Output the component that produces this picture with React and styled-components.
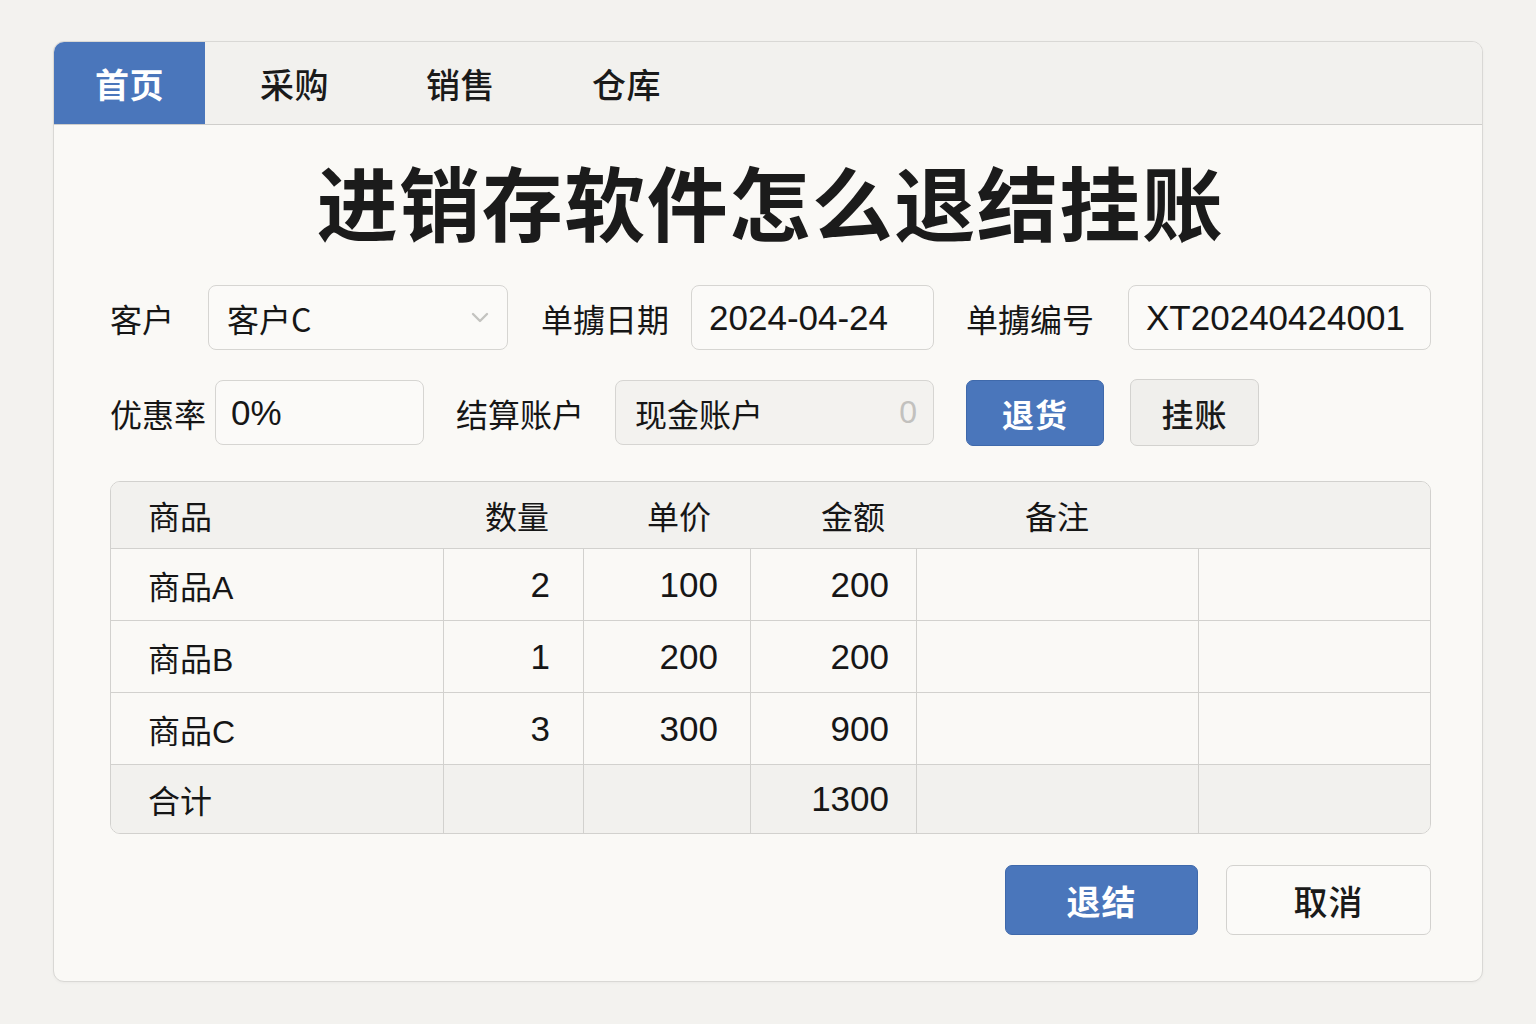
import React from "react";
import styled, { createGlobalStyle } from "styled-components";

const GlobalStyle = createGlobalStyle`
  html, body {
    margin: 0;
    padding: 0;
    background: #f3f2ef;
  }
  body {
    font-family: "Noto Sans CJK SC", "Noto Sans", sans-serif;
    color: #1c1c1c;
  }
`;

const Page = styled.div`
  width: 1536px;
  height: 1024px;
  box-sizing: border-box;
  padding: 41px 53px 0 53px;
`;

const Card = styled.div`
  height: 941px;
  box-sizing: border-box;
  background: #faf9f6;
  border: 1px solid #d9d8d5;
  border-radius: 11px;
  overflow: hidden;
  display: flex;
  flex-direction: column;
  box-shadow: 0 1px 3px rgba(0, 0, 0, 0.04);
`;

const TabBar = styled.div`
  display: flex;
  gap: 13px;
  height: 82px;
  background: #f2f1ee;
  border-bottom: 1px solid #cfcecb;
  flex-shrink: 0;
`;

const Tab = styled.div`
  display: flex;
  align-items: center;
  padding: 0 ${(p) => (p.$active ? "41px" : "42px")};
  font-size: 34px;
  font-weight: ${(p) => (p.$active ? 700 : 500)};
  color: ${(p) => (p.$active ? "#ffffff" : "#1a1a1a")};
  background: ${(p) => (p.$active ? "#4a76bb" : "transparent")};
  letter-spacing: 0.5px;
`;

const Body = styled.div`
  flex: 1;
  display: flex;
  flex-direction: column;
  padding: 0 51px 0 56px;
`;

const Title = styled.h1`
  margin: 32px 0 0 0;
  text-align: center;
  font-size: 81px;
  line-height: 86px;
  font-weight: 700;
  color: #1b1b1b;
  letter-spacing: 1.5px;
`;

const FormRow = styled.div`
  display: flex;
  align-items: center;
  height: 65px;
  margin-top: ${(p) => p.$top}px;
`;

const Label = styled.span`
  font-size: 32px;
  font-weight: 400;
  color: #161616;
  white-space: nowrap;
  margin-left: ${(p) => p.$ml || 0}px;
  margin-right: ${(p) => p.$mr || 0}px;
`;

const Field = styled.div`
  box-sizing: border-box;
  width: ${(p) => p.$w}px;
  height: 65px;
  display: flex;
  align-items: center;
  justify-content: space-between;
  padding: 0 ${(p) => p.$pr || 18}px 0 ${(p) => p.$pl || 18}px;
  border: 1.5px solid #d6d5d2;
  border-radius: 8px;
  background: ${(p) => (p.$muted ? "#f3f2ef" : "#fbfaf8")};
  font-size: ${(p) => (p.$latin ? 35 : 32)}px;
  color: #161616;
  font-family: ${(p) =>
    p.$latin
      ? `"Liberation Sans", "Noto Sans CJK SC", sans-serif`
      : `"Noto Sans CJK SC", "Noto Sans", sans-serif`};
`;

const Faint = styled.span`
  color: #c2c1be;
  font-size: 32px;
  font-family: "Liberation Sans", sans-serif;
`;

const Button = styled.button`
  box-sizing: border-box;
  width: ${(p) => p.$w}px;
  height: ${(p) => p.$h}px;
  margin-left: ${(p) => p.$ml || 0}px;
  border-radius: 7px;
  font-family: "Noto Sans CJK SC", "Noto Sans", sans-serif;
  font-size: ${(p) => p.$fs || 32}px;
  font-weight: ${(p) => (p.$primary ? 700 : 500)};
  display: flex;
  align-items: center;
  justify-content: center;
  padding: 0;
  letter-spacing: 1px;
  color: ${(p) => (p.$primary ? "#ffffff" : "#1a1a1a")};
  background: ${(p) =>
    p.$primary ? "#4a76bb" : p.$plain ? "#fbfaf8" : "#f0efec"};
  border: 1.5px solid ${(p) => (p.$primary ? "#3f69ab" : "#d3d2cf")};
`;

const TableWrap = styled.div`
  margin-top: 36px;
  border: 1.5px solid #d2d1ce;
  border-radius: 10px;
  overflow: hidden;
`;

const Grid = styled.div`
  display: grid;
  grid-template-columns: 332px 140px 167px 166px 282px 1fr;
`;

const HeadCell = styled.div`
  height: 66px;
  background: #f2f1ee;
  border-bottom: 1.5px solid #d2d1ce;
  display: flex;
  align-items: center;
  justify-content: ${(p) => p.$align || "flex-start"};
  padding: 0 ${(p) => p.$pr || 0}px 0 ${(p) => p.$pl || 0}px;
  font-size: 32px;
  font-weight: 400;
  color: #161616;
`;

const Cell = styled.div`
  height: ${(p) => (p.$last ? 68 : 72)}px;
  box-sizing: border-box;
  display: flex;
  align-items: center;
  justify-content: ${(p) => (p.$num ? "flex-end" : "flex-start")};
  padding: 0 ${(p) => p.$pr || 0}px 0 ${(p) => p.$pl || 0}px;
  background: ${(p) => (p.$total ? "#f2f1ee" : "#faf9f6")};
  border-bottom: ${(p) => (p.$last ? "none" : "1.5px solid #d2d1ce")};
  border-left: ${(p) => (p.$first ? "none" : "1.5px solid #d2d1ce")};
  font-size: ${(p) => (p.$num ? 35 : 32)}px;
  font-family: "Liberation Sans", "Noto Sans CJK SC", sans-serif;
  color: #161616;
`;

const Footer = styled.div`
  display: flex;
  justify-content: flex-end;
  margin-top: 31px;
  gap: 28px;
`;

function Chevron() {
  return (
    <svg width="22" height="14" viewBox="0 0 22 14">
      <path
        d="M4 3 L11 10 L18 3"
        fill="none"
        stroke="#c4c3c0"
        strokeWidth="2.4"
        strokeLinecap="round"
        strokeLinejoin="round"
      />
    </svg>
  );
}

const rows = [
  { name: "商品A", qty: "2", price: "100", amt: "200" },
  { name: "商品B", qty: "1", price: "200", amt: "200" },
  { name: "商品C", qty: "3", price: "300", amt: "900" },
];

export default function App() {
  return (
    <>
      <GlobalStyle />
      <Page>
        <Card>
          <TabBar>
            <Tab $active>首页</Tab>
            <Tab>采购</Tab>
            <Tab>销售</Tab>
            <Tab>仓库</Tab>
          </TabBar>
          <Body>
            <Title>进销存软件怎么退结挂账</Title>

            <FormRow $top={42}>
              <Label $mr={34}>客户</Label>
              <Field $w={300} $pr={16}>
                <span>客户C</span>
                <Chevron />
              </Field>
              <Label $ml={33} $mr={22}>单擄日期</Label>
              <Field $w={243} $pl={17} $latin>2024-04-24</Field>
              <Label $ml={32} $mr={34}>单擄编号</Label>
              <Field $w={303} $pl={17} $latin>XT20240424001</Field>
            </FormRow>

            <FormRow $top={30}>
              <Label $mr={9}>优惠率</Label>
              <Field $w={209} $pl={15} $latin>0%</Field>
              <Label $ml={32} $mr={31}>结算账户</Label>
              <Field $w={319} $pl={19} $pr={16} $muted>
                <span>现金账户</span>
                <Faint>0</Faint>
              </Field>
              <Button $primary $w={138} $h={66} $ml={32}>退货</Button>
              <Button $w={129} $h={67} $ml={26}>挂账</Button>
            </FormRow>

            <TableWrap>
              <Grid>
                <HeadCell $pl={37}>商品</HeadCell>
                <HeadCell $align="flex-end" $pr={34}>数量</HeadCell>
                <HeadCell $align="flex-end" $pr={39}>单价</HeadCell>
                <HeadCell $align="flex-end" $pr={31}>金额</HeadCell>
                <HeadCell $align="center">备注</HeadCell>
                <HeadCell />

                {rows.map((r) => (
                  <React.Fragment key={r.name}>
                    <Cell $first $pl={37}>{r.name}</Cell>
                    <Cell $num $pr={33}>{r.qty}</Cell>
                    <Cell $num $pr={32}>{r.price}</Cell>
                    <Cell $num $pr={27}>{r.amt}</Cell>
                    <Cell />
                    <Cell />
                  </React.Fragment>
                ))}

                <Cell $first $total $last $pl={37}>合计</Cell>
                <Cell $total $last />
                <Cell $total $last />
                <Cell $num $total $last $pr={27}>1300</Cell>
                <Cell $total $last />
                <Cell $total $last />
              </Grid>
            </TableWrap>

            <Footer>
              <Button $primary $w={193} $h={70} $fs={34}>退结</Button>
              <Button $plain $w={205} $h={70} $fs={34}>取消</Button>
            </Footer>
          </Body>
        </Card>
      </Page>
    </>
  );
}
